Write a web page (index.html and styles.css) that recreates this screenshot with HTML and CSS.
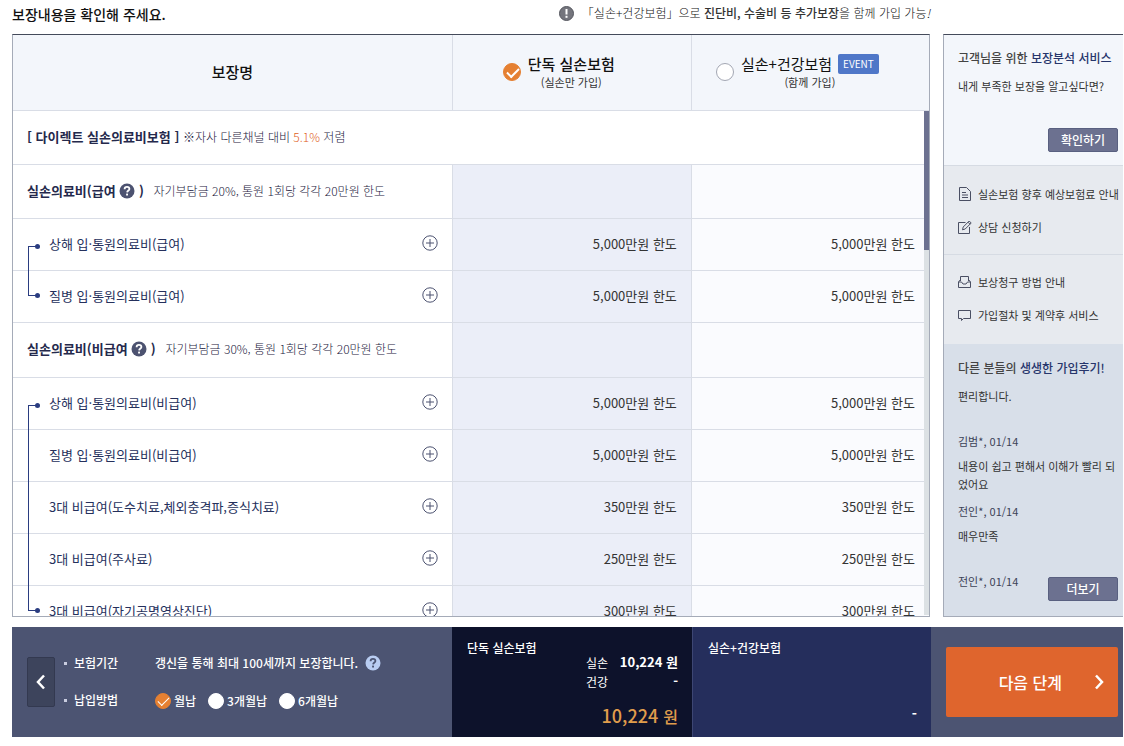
FILE: index.html
```
<!DOCTYPE html>
<html lang="ko">
<head>
<meta charset="utf-8">
<title>보장내용 확인</title>
<meta name="viewport" content="width=device-width, initial-scale=1">
<link rel="stylesheet" href="styles.css">
</head>
<body>
<svg class="defs" aria-hidden="true">
  <symbol id="plus" viewBox="0 0 16 16"><circle cx="8" cy="8" r="7.2" fill="none" stroke="currentColor"/><path d="M4 8h8M8 4v8" stroke="currentColor" fill="none"/></symbol>
  <symbol id="help" viewBox="0 0 16 16"><circle cx="8" cy="8" r="7.5" fill="var(--disc)"/><path d="M5.6 6.2C5.6 4.7 6.6 3.9 8 3.9s2.4.8 2.4 2c0 1.600-2.100 1.700-2.300 3.500" stroke="var(--mark)" stroke-width="1.800" fill="none"/><rect x="7.100" y="10.600" width="1.900" height="1.900" fill="var(--mark)"/></symbol>
</svg>
<div class="page">
  <header class="top">
    <h1>보장내용을 확인해 주세요.</h1>
    <p class="notice">
      <svg class="ico15" viewBox="0 0 15 15" aria-hidden="true"><circle cx="7.500" cy="7.500" r="7" fill="#74757d" stroke="#55565e"/><path d="M7.500 3v5.500" stroke="#fff" stroke-width="2"/><rect x="6.500" y="9.800" width="2" height="2" fill="#fff"/></svg>
      <span>「실손+건강보험」으로 <b>진단비, 수술비 등 추가보장</b>을 함께 가입 가능<i>!</i></span>
    </p>
  </header>

  <div class="content">
    <main class="coverage">
      <table>
        <colgroup><col class="c-name"><col class="c-solo"><col class="c-combo"></colgroup>
        <thead>
          <tr>
            <th scope="col">보장명</th>
            <th scope="col">
              <label class="plan"><input type="radio" name="plan" checked>
                <span class="plan-text"><strong>단독 실손보험</strong><small>(실손만 가입)</small></span></label>
            </th>
            <th scope="col">
              <label class="plan"><input type="radio" name="plan">
                <span class="plan-text"><span class="plan-name">실손+건강보험 <em class="event">EVENT</em></span><small>(함께 가입)</small></span></label>
            </th>
          </tr>
        </thead>
        <tbody>
          <tr class="section"><td colspan="3"><b>[ 다이렉트 실손의료비보험 ]</b> <span class="sub">※자사 다른채널 대비 <span class="rate">5.1%</span> 저렴</span></td></tr>
          <tr class="section"><td><b>실손의료비(급여 <button class="help" aria-label="급여 도움말"><svg><use href="#help"/></svg></button> )</b> <span class="sub far">자기부담금 20%, 통원 1회당 각각 20만원 한도</span></td><td></td><td></td></tr>
          <tr><td class="branch first"><div class="item">상해 입·통원의료비(급여)<button class="more" aria-label="상세 보기"><svg><use href="#plus"/></svg></button></div></td><td>5,000만원 한도</td><td>5,000만원 한도</td></tr>
          <tr><td class="branch last"><div class="item">질병 입·통원의료비(급여)<button class="more" aria-label="상세 보기"><svg><use href="#plus"/></svg></button></div></td><td>5,000만원 한도</td><td>5,000만원 한도</td></tr>
          <tr class="section tall"><td><b>실손의료비(비급여 <button class="help" aria-label="비급여 도움말"><svg><use href="#help"/></svg></button> )</b> <span class="sub far">자기부담금 30%, 통원 1회당 각각 20만원 한도</span></td><td></td><td></td></tr>
          <tr><td class="branch first"><div class="item">상해 입·통원의료비(비급여)<button class="more" aria-label="상세 보기"><svg><use href="#plus"/></svg></button></div></td><td>5,000만원 한도</td><td>5,000만원 한도</td></tr>
          <tr><td class="branch"><div class="item">질병 입·통원의료비(비급여)<button class="more" aria-label="상세 보기"><svg><use href="#plus"/></svg></button></div></td><td>5,000만원 한도</td><td>5,000만원 한도</td></tr>
          <tr><td class="branch"><div class="item">3대 비급여(도수치료,체외충격파,증식치료)<button class="more" aria-label="상세 보기"><svg><use href="#plus"/></svg></button></div></td><td>350만원 한도</td><td>350만원 한도</td></tr>
          <tr><td class="branch"><div class="item">3대 비급여(주사료)<button class="more" aria-label="상세 보기"><svg><use href="#plus"/></svg></button></div></td><td>250만원 한도</td><td>250만원 한도</td></tr>
          <tr><td class="branch last"><div class="item">3대 비급여(자기공명영상진단)<button class="more" aria-label="상세 보기"><svg><use href="#plus"/></svg></button></div></td><td>300만원 한도</td><td>300만원 한도</td></tr>
        </tbody>
      </table>
      <div class="track"><div class="thumb"></div></div>
    </main>

    <aside class="side">
      <section class="analysis">
        <h2>고객님을 위한 <span>보장분석 서비스</span></h2>
        <p>내게 부족한 보장을 알고싶다면?</p>
        <button class="small-btn">확인하기</button>
      </section>
      <ul class="links">
        <li><a href="#"><svg viewBox="0 0 14 14"><path d="M1.500 .5h7l4 4v9h-11zM4 5.500h4M4 8h6M4 10.500h6"/></svg>실손보험 향후 예상보험료 안내</a></li>
        <li><a href="#"><svg viewBox="0 0 14 14"><path d="M7.500 2.500H.5v11h11V7M4.500 9.800l.7-2.800 6-6 2 2-6 6zM10 2.200l2 2"/></svg>상담 신청하기</a></li>
      </ul>
      <ul class="links">
        <li><a href="#"><svg viewBox="0 0 14 14"><path d="M2.500 6V1.500h8V6M2.500 4.500l-2 2.500v5.500h12V7l-2-2.500M.5 7h3l1.500 2h3l1.500-2h3"/></svg>보상청구 방법 안내</a></li>
        <li><a href="#"><svg viewBox="0 0 14 14"><path d="M.5 2.500h12v8h-7l-2 2v-2h-3z"/></svg>가입절차 및 계약후 서비스</a></li>
      </ul>
      <section class="reviews">
        <h2>다른 분들의 <span>생생한 가입후기!</span></h2>
        <div class="review"><p>편리합니다.</p><cite>김범*, 01/14</cite></div>
        <div class="review"><p>내용이 쉽고 편해서 이해가 빨리 되었어요</p><cite>전인*, 01/14</cite></div>
        <div class="review"><p>매우만족</p><cite>전인*, 01/14</cite></div>
        <button class="small-btn">더보기</button>
      </section>
    </aside>
  </div>

  <footer class="bar">
    <div class="terms">
      <button class="prev" aria-label="이전"><svg viewBox="0 0 10 16"><path d="M8 1.500L2 8l6 6.500"/></svg></button>
      <dl>
        <dt>보험기간</dt>
        <dd>갱신을 통해 최대 100세까지 보장합니다. <button class="help light" aria-label="보험기간 도움말"><svg><use href="#help"/></svg></button></dd>
        <dt>납입방법</dt>
        <dd class="cycle">
          <label><input type="radio" name="cycle" checked>월납</label>
          <label><input type="radio" name="cycle">3개월납</label>
          <label><input type="radio" name="cycle">6개월납</label>
        </dd>
      </dl>
    </div>
    <section class="price solo">
      <h3>단독 실손보험</h3>
      <dl><dt>실손</dt><dd>10,224 원</dd><dt>건강</dt><dd>-</dd></dl>
      <p class="total">10,224 <span>원</span></p>
    </section>
    <section class="price combo">
      <h3>실손+건강보험</h3>
      <p class="total none">-</p>
    </section>
    <div class="go"><button class="next"><span>다음 단계</span><svg viewBox="0 0 10 16"><path d="M2 1.500L8 8l-6 6.500"/></svg></button></div>
  </footer>
</div>
</body>
</html>
```
FILE: styles.css
```
* { box-sizing: border-box; }
body, h1, h2, h3, p, ul, dl, dd { margin: 0; padding: 0; }
body {
  font-family: "Noto Sans CJK KR", "Noto Sans", sans-serif;
  font-size: 13px;
  line-height: 18px;
  color: #333;
  background: #fff;
}
button { font: inherit; border: 0; padding: 0; background: none; color: inherit; cursor: pointer; }
ul { list-style: none; }
.defs { position: absolute; width: 0; height: 0; }

.page { display: flex; flex-direction: column; height: 100vh; padding: 0 1px 9px 12px; }

.top { display: flex; justify-content: space-between; width: calc(100% - 193px); height: 34px; padding-top: 4px; }
.top h1 { font-size: 14px; font-weight: 500; line-height: 20px; color: #111; }
.notice { display: flex; align-items: center; gap: 8px; height: 18px; font-size: 12px; font-weight: 300; color: #111; }
.notice b { font-weight: 500; color: #333; }
.ico15 { width: 15px; height: 15px; }

.content { display: flex; gap: 13px; flex: 1; min-height: 0; }
.coverage {
  position: relative;
  flex: 1;
  overflow: hidden;
  border: 1px solid #a5abb8;
  border-top-color: #444a5a;
}
table { width: 100%; table-layout: fixed; border-spacing: 0; }
.c-name { width: 47.9%; }
.c-solo { width: 26.1%; }
.c-combo { width: 26%; }
th {
  height: 76px;
  padding: 0 0 2px;
  background: #f3f6fb;
  border-bottom: 1px solid #d9dde6;
  font-size: 15px;
  font-weight: 500;
  color: #111;
}
th + th, td + td { border-left: 1px solid #d9dde6; }
td { height: 52px; padding: 0 14px 2px; border-bottom: 1px solid #d9dde6; }
td + td { text-align: right; color: #333; background: #fafbfe; }
td:nth-child(2) { background: #ebeef8; }
.section td { height: 54px; }
.section.tall td { height: 55px; }
.section b { font-weight: 700; color: #25294c; }
.sub { font-size: 12px; font-weight: 300; color: #1c2140; }
.sub.far { margin-left: 6px; }
.rate { color: #e0601a; }

.plan { display: flex; align-items: center; justify-content: center; gap: 7px; padding-right: 26px; }
.plan-text { display: flex; flex-direction: column; }
.plan strong { font-weight: 500; line-height: 20px; }
.plan-name { display: flex; align-items: center; gap: 6px; font-weight: 400; }
.plan small { font-size: 11px; font-weight: 400; line-height: 16px; text-align: center; color: #333; }
.event {
  padding: 0 5px;
  border-radius: 2px;
  background: #4f77c8;
  color: #fff;
  font-size: 10px;
  font-style: normal;
  line-height: 20px;
}

input[type="radio"] {
  appearance: none;
  position: relative;
  flex: none;
  width: 18px;
  height: 18px;
  margin: 0;
  border: 1px solid #a3a7b3;
  border-radius: 50%;
  background: #fff;
}
input[type="radio"]:checked { background: #e58032; border-color: #e58032; }
input[type="radio"]:checked::after {
  content: "";
  position: absolute;
  left: 3px;
  top: 4px;
  width: 10px;
  height: 5px;
  border: solid #fff;
  border-width: 0 0 2px 2px;
  transform: rotate(-45deg);
}

.help { --disc: #4c5270; --mark: #fff; width: 16px; height: 16px; vertical-align: -3px; }
.help.light { --disc: #b9cdf2; --mark: #4b5472; margin-left: 4px; }
.help svg, .more svg { display: block; width: 16px; height: 16px; }

.branch { position: relative; padding-left: 36px; color: #25305c; }
.branch::before { content: ""; position: absolute; left: 15px; top: 0; bottom: -1px; border-left: 1px solid #2a3c80; }
.branch.first::before { top: 27px; width: 10px; border-top: 1px solid #2a3c80; }
.branch.last::before { bottom: 26px; width: 10px; border-bottom: 1px solid #2a3c80; }
.branch.first::after, .branch.last::after {
  content: "";
  position: absolute;
  left: 22px;
  top: 25px;
  width: 5px;
  height: 5px;
  border-radius: 50%;
  background: #2a3c80;
}
.branch.last::after { top: 22px; }
.item { display: flex; justify-content: space-between; }
.more { width: 16px; height: 16px; color: #4c5270; }

.track { position: absolute; top: 76px; right: 0; bottom: 1px; width: 5px; background: #dce1e4; }
.thumb { height: 139px; background: #6c7190; }

.side {
  display: flex;
  flex-direction: column;
  width: 180px;
  border: 1px solid #a5abb8;
  border-top-color: #444a5a;
  border-right: 0;
  background: #e7eaef;
  font-size: 11px;
}
.side h2 { font-size: 12px; font-weight: 500; color: #444; white-space: nowrap; }
.side h2 span { color: #26356b; }
.analysis { display: flex; flex-direction: column; height: 130px; padding: 14px 5px 13px 14px; background: #f3f6fb; }
.analysis p { margin-top: 10px; }
.small-btn {
  align-self: flex-end;
  width: 70px;
  height: 24px;
  margin-top: auto;
  border: 1px solid #596080;
  border-radius: 2px;
  background: #6c7190;
  color: #fff;
  font-size: 12px;
  font-weight: 500;
  line-height: 20px;
}
.links { padding: 19px 0 18px 14px; border-top: 1px solid #d6dbe3; }
.links + .links { padding: 18px 0 20px 14px; }
.links li + li { margin-top: 15px; }
.links a { display: flex; align-items: center; gap: 6px; color: #333; text-decoration: none; white-space: nowrap; }
.links svg { width: 14px; height: 14px; fill: none; stroke: #4a4f63; }
.reviews { position: relative; flex: 1; padding: 15px 5px 0 14px; background: #d8dfe9; }
.review { display: flex; flex-direction: column; height: 63px; margin-top: 7px; }
.review:first-of-type { margin-top: 10px; }
.review cite { margin-top: auto; font-style: normal; color: #3c4257; }
.reviews .small-btn { position: absolute; right: 5px; bottom: 15px; }

.bar {
  display: grid;
  grid-template-columns: 440fr 240fr 239fr 192px;
  height: 110px;
  margin-top: 10px;
  background: #4c5472;
  color: #fff;
  font-size: 12px;
}
.terms { display: flex; align-items: center; padding-left: 15px; gap: 9px; }
.prev { width: 28px; height: 50px; border: 1px solid #333950; border-radius: 2px; background: #3d445c; }
.prev svg { display: block; width: 10px; height: 16px; margin: auto; }
.prev path, .next path { fill: none; stroke: #fff; stroke-width: 2.500px; }
.terms dl { display: grid; grid-template-columns: 81px auto; row-gap: 18px; align-items: center; }
.terms dt { display: flex; align-items: center; gap: 7px; font-weight: 500; }
.terms dt::before { content: ""; width: 3px; height: 3px; background: #c9cde0; }
.terms dd { display: flex; align-items: center; gap: 3px; margin-left: 10px; font-weight: 500; }
.terms .cycle { gap: 12px; padding-top: 2px; }
.cycle label { display: flex; align-items: center; gap: 3px; }
.cycle input[type="radio"] { width: 16px; height: 16px; border-color: #fff; }
.cycle input[type="radio"]:checked { border-color: #e58032; }
.cycle input[type="radio"]:checked::after { left: 2px; top: 3px; border-width: 0 0 1px 1px; }
.price { display: flex; flex-direction: column; padding: 12px 14px 8px 15px; }
.price h3 { font-size: 12px; font-weight: 500; }
.price dl { display: grid; grid-template-columns: auto 70px; justify-content: end; margin-top: -4px; }
.price dt { padding-top: 1px; }
.price dd { font-size: 13px; font-weight: 700; text-align: right; }
.solo { background: #0d122b; }
.combo { border-left: 1px solid #3d4673; background: #252e5c; }
.total { margin-top: auto; text-align: right; font-size: 18px; font-weight: 500; line-height: 26px; color: #e09d4c; }
.total span { font-size: 16px; }
.total.none { padding-bottom: 3px; font-size: 14px; font-weight: 700; color: #fff; }
.go { padding: 20px 5px 20px 15px; }
.next { display: flex; align-items: center; justify-content: flex-end; gap: 32px; width: 100%; height: 100%; padding-right: 14px; border-radius: 2px; background: #df652d; font-size: 16px; font-weight: 500; }
.next svg { width: 10px; height: 16px; }
```
